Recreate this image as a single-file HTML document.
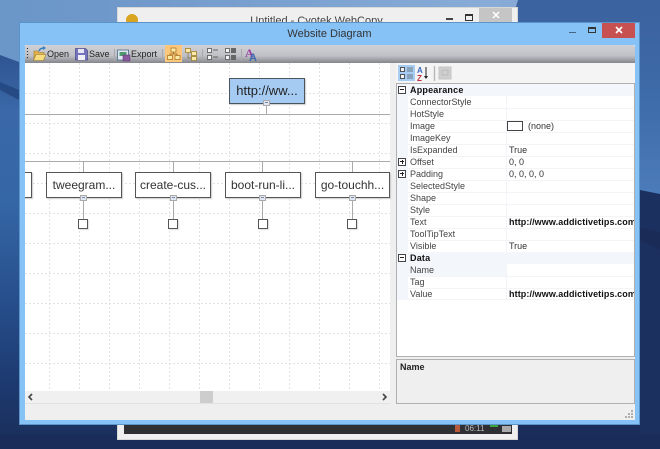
<!DOCTYPE html>
<html><head><meta charset="utf-8"><style>
html,body{margin:0;padding:0;background:#1b2d5a}
body{width:660px;height:449px;position:relative;overflow:hidden;font-family:"Liberation Sans",sans-serif;color:#222}
#w{position:absolute;left:0;top:0;width:660px;height:449px;overflow:hidden;filter:blur(.3px)}
.a{position:absolute}
.t{position:absolute;white-space:nowrap;font-size:9px;line-height:12px}
.node{position:absolute;box-sizing:border-box;height:26px;width:76px;background:#fff;border:1px solid #555;box-shadow:1px 1px 1px #ccc;font-size:12px;line-height:24px;text-align:center;white-space:nowrap;overflow:hidden;color:#333}
.v{position:absolute;width:1px;background:#aaa}
.h{position:absolute;height:1px;background:#aaa}
.exp{position:absolute;box-sizing:border-box;width:7px;height:6px;background:#dfe6f2;border:1px solid #aaa}
.exp:before{content:"";position:absolute;left:1px;top:1px;width:3px;height:1px;background:#7a8aa0}
.leaf{position:absolute;box-sizing:border-box;width:10px;height:10px;background:#fff;border:1px solid #555;box-shadow:1px 1px 1px #ddd}
.pb{position:absolute;box-sizing:border-box;width:8px;height:8px;border:1px solid #444;background:#fff;font-size:0}
.pb:before{content:"";position:absolute;left:1px;top:2px;width:4px;height:1px;background:#222}
.pb.p:after{content:"";position:absolute;left:2.5px;top:1px;width:1px;height:4px;background:#222}
</style></head><body><div id="w">
<svg class="a" style="left:0;top:0" width="660" height="449">
<defs>
<linearGradient id="top" x1="0" y1="0" x2="1" y2="0"><stop offset="0" stop-color="#6a96c8"/><stop offset=".2" stop-color="#6f98ca"/><stop offset="1" stop-color="#8aadd8"/></linearGradient>
<linearGradient id="lf" gradientUnits="userSpaceOnUse" x1="0" y1="55" x2="0" y2="449"><stop offset="0" stop-color="#2f5591"/><stop offset=".14" stop-color="#3a68a8"/><stop offset=".37" stop-color="#3566a6"/><stop offset=".62" stop-color="#274f8c"/><stop offset=".83" stop-color="#1d3a70"/><stop offset="1" stop-color="#1a2d58"/></linearGradient>
<linearGradient id="rt" x1="0" y1="0" x2="0" y2="1"><stop offset="0" stop-color="#3a629e"/><stop offset=".55" stop-color="#3f6cab"/><stop offset="1" stop-color="#4c7cb9"/></linearGradient>
</defs>
<rect width="660" height="449" fill="#1b2d5a"/>
<rect x="0" y="50" width="130" height="399" fill="url(#lf)"/>
<polygon points="0,0 518,0 508,30 19,62 0,55" fill="url(#top)"/>
<polygon points="0,82 19,90 19,100 0,90" fill="#264a84"/>
<polygon points="500,0 660,0 660,196 500,185" fill="url(#rt)"/>
<polygon points="500,0 518,0 510,26 500,26" fill="#86a9d6"/>
<polygon points="640,190 660,194 660,449 640,449" fill="#1c3060"/>
<polygon points="640,228 660,232 660,250 640,240" fill="#1a2b57"/>
<rect x="0" y="435" width="660" height="14" fill="#1b2d5a" opacity=".9"/>
</svg>

<!-- back window -->
<div class="a" style="left:118px;top:8px;width:399px;height:431px;background:#efefef;box-shadow:0 0 0 1px #d8d8d8"></div>
<div class="a" style="left:479px;top:8px;width:33px;height:14px;background:#c5c5c5"></div>
<div class="t" style="left:118px;top:13px;width:397px;text-align:center;font-size:11px;line-height:16px;color:#444">Untitled - Cyotek WebCopy</div>
<div class="a" style="left:126px;top:14px;width:12px;height:12px;border-radius:6px;background:#d9a520"></div>
<div class="a" style="left:446px;top:18px;width:7px;height:2px;background:#444"></div>
<div class="a" style="left:465px;top:14px;box-sizing:border-box;width:8px;height:7px;border:1px solid #333;border-top-width:2px"></div>
<svg class="a" style="left:492px;top:11px" width="8" height="8"><path d="M1 1L7 7M7 1L1 7" stroke="#fff" stroke-width="1.5"/></svg>
<div class="a" style="left:124px;top:425px;width:388px;height:9px;background:#2f3033"></div>
<div class="t" style="left:465px;top:424px;font-size:8px;line-height:10px;color:#bbb">06:11</div>
<div class="a" style="left:455px;top:425px;width:5px;height:7px;background:#b5583c"></div>
<div class="a" style="left:490px;top:425px;width:8px;height:2px;background:#3aa63a"></div>
<div class="a" style="left:502px;top:426px;width:9px;height:6px;background:#aaa"></div>

<!-- front window -->
<div class="a" style="left:19px;top:22px;width:621px;height:403px;box-sizing:border-box;background:#87c2f7;border:1px solid #5c93c9"></div>
<div class="t" style="left:19px;top:27px;width:621px;text-align:center;font-size:11px;line-height:15px;color:#333">Website Diagram</div>
<div class="a" style="left:569px;top:32px;width:7px;height:1px;background:#46637f"></div>
<div class="a" style="left:588px;top:27px;box-sizing:border-box;width:8px;height:6px;border:1px solid #333;border-top-width:2px"></div>
<div class="a" style="left:602px;top:23px;width:33px;height:15px;background:#c75050"></div>
<svg class="a" style="left:615px;top:26px" width="8" height="8"><path d="M1 1L7 7M7 1L1 7" stroke="#fff" stroke-width="1.6"/></svg>

<!-- client -->
<div class="a" style="left:25px;top:45px;width:610px;height:375px;background:#efefef"></div>

<!-- toolbar -->
<div class="a" style="left:25px;top:45px;width:610px;height:18px;background:linear-gradient(#d0d1d7,#bfc0c6 60%,#85868c);border-radius:2px 2px 0 0"></div>
<svg class="a" style="left:25px;top:45px" width="250" height="18">
<path d="M2.5 3v1M2.500 6v1M2.500 9v1M2.500 12v1" stroke="#333" stroke-width="1.2"/>
<!-- open -->
<path d="M9 6h4l1 1.500h5V15H9z" fill="#e2b24c" stroke="#9a7a30" stroke-width=".6"/>
<path d="M8.500 15.500l2.500-6h10l-2.500 6z" fill="#f8dc80" stroke="#9a7a30" stroke-width=".6"/>
<path d="M14 6q1-3 5-3" stroke="#2f7fc0" fill="none" stroke-width="1.4"/><path d="M18 1l3 2-3 2z" fill="#2f7fc0"/>
<!-- save -->
<path d="M50.500 3.500h10l2 2v9.500h-12z" fill="#7473bd" stroke="#54548f" stroke-width=".8"/>
<rect x="53" y="4" width="6" height="4" fill="#e8e8f4"/><rect x="53" y="10" width="7" height="5" fill="#f0f0f8"/>
<path d="M89.500 4v12" stroke="#a8a8ae"/>
<!-- export -->
<rect x="92.500" y="5" width="11" height="10" fill="#dfe8f2" stroke="#4a6a8a" stroke-width=".8"/>
<rect x="94.500" y="7" width="7" height="4" fill="#4f9a6f"/>
<rect x="98" y="10" width="7" height="6" fill="#8a5aa0" stroke="#553366" stroke-width=".5"/>
<path d="M137.500 4v12" stroke="#a8a8ae"/>
<!-- layout active -->
<rect x="140" y="0" width="17" height="17" fill="#fbc77c"/>
<g fill="#fbe9a8" stroke="#b07a20" stroke-width=".8"><rect x="146" y="3" width="5" height="4"/><rect x="142.500" y="10.500" width="5" height="4"/><rect x="150" y="10.500" width="5" height="4"/></g>
<path d="M148.500 7v2h-3.500v1.500M148.500 9h3.500v1.500" stroke="#8a6020" fill="none" stroke-width=".7"/>
<!-- layout 2 -->
<g fill="#fbe9a8" stroke="#a08030" stroke-width=".8"><rect x="160.500" y="3.500" width="5" height="4"/><rect x="166.500" y="6.500" width="5" height="4"/><rect x="166.500" y="11.500" width="5" height="4"/></g>
<path d="M163 8v5h3" stroke="#807040" fill="none" stroke-width=".7"/>
<path d="M177.500 4v12" stroke="#a8a8ae"/>
<!-- expand icons -->
<g fill="#f4f4f6" stroke="#555" stroke-width=".8"><rect x="182.500" y="3.500" width="4" height="4"/><rect x="182.500" y="10.500" width="4" height="4"/></g>
<path d="M188 5h5M188 12h5" stroke="#666"/>
<g fill="#f4f4f6" stroke="#555" stroke-width=".8"><rect x="200.500" y="3.500" width="4" height="4"/><rect x="200.500" y="10.500" width="4" height="4"/></g>
<path d="M206 3h5v5h-5zM206 10h5v5h-5z" fill="#666"/>
<path d="M216.500 4v12" stroke="#a8a8ae"/>
<!-- font icon -->
<text x="220" y="12" font-family="Liberation Serif" font-size="12" font-weight="bold" fill="#9a3fa0">A</text>
<text x="224" y="16" font-family="Liberation Sans" font-size="11" font-weight="bold" fill="#3a6ab0">A</text>
</svg>
<div class="t" style="left:47px;top:48px;color:#222">Open</div>
<div class="t" style="left:89px;top:48px;color:#222">Save</div>
<div class="t" style="left:131px;top:48px;color:#222">Export</div>

<!-- canvas -->
<div class="a" style="left:25px;top:63px;width:365px;height:328px;overflow:hidden;background:#fff">
<svg class="a" style="left:0;top:0" width="365" height="328">
<g stroke="#e2e2e2" stroke-dasharray="2 2" fill="none">
<path d="M24.500 0v328M54.500 0v328M84.500 0v328M114.500 0v328M144.500 0v328M174.500 0v328M204.500 0v328M234.500 0v328M264.500 0v328M294.500 0v328M324.500 0v328M354.500 0v328"/>
<path d="M0 30.500h365M0 60.500h365M0 90.500h365M0 120.500h365M0 150.500h365M0 180.500h365M0 210.500h365M0 240.500h365M0 270.500h365M0 300.500h365"/>
</g></svg>
</div>

<!-- diagram -->
<div class="node" style="left:229px;top:78px;background:#a6cbf3;border-color:#4a5560;color:#222;font-size:13px;line-height:24px">http://ww...</div>
<div class="v" style="left:266px;top:104px;height:10px"></div>
<div class="exp" style="left:263px;top:100px"></div>
<div class="h" style="left:25px;top:114px;width:365px"></div>
<div class="h" style="left:25px;top:161px;width:365px"></div>

<div class="node" style="left:0;top:172px;width:32px;clip-path:inset(-2px -2px -2px 25px)"></div>
<div class="node" style="left:46px;top:172px">tweegram...</div>
<div class="node" style="left:135px;top:172px">create-cus...</div>
<div class="node" style="left:225px;top:172px">boot-run-li...</div>
<div class="node" style="left:315px;top:172px;width:75px">go-touchh...</div>

<div class="v" style="left:83px;top:162px;height:10px"></div>
<div class="v" style="left:173px;top:162px;height:10px"></div>
<div class="v" style="left:262px;top:162px;height:10px"></div>
<div class="v" style="left:352px;top:162px;height:10px"></div>
<div class="v" style="left:83px;top:198px;height:21px"></div>
<div class="v" style="left:173px;top:198px;height:21px"></div>
<div class="v" style="left:262px;top:198px;height:21px"></div>
<div class="v" style="left:352px;top:198px;height:21px"></div>
<div class="exp" style="left:80px;top:195px"></div>
<div class="exp" style="left:170px;top:195px"></div>
<div class="exp" style="left:259px;top:195px"></div>
<div class="exp" style="left:349px;top:195px"></div>
<div class="leaf" style="left:78px;top:219px"></div>
<div class="leaf" style="left:168px;top:219px"></div>
<div class="leaf" style="left:258px;top:219px"></div>
<div class="leaf" style="left:347px;top:219px"></div>

<!-- hscroll -->
<div class="a" style="left:25px;top:391px;width:365px;height:12px;background:#f0f0f0;border-bottom:1px solid #e2e2e2"></div>
<div class="a" style="left:200px;top:391px;width:13px;height:12px;background:#cdcdcd"></div>
<svg class="a" style="left:27px;top:393px" width="8" height="8"><path d="M5 1L2 4l3 3" fill="none" stroke="#444" stroke-width="1.6"/></svg>
<svg class="a" style="left:380px;top:393px" width="8" height="8"><path d="M3 1l3 3-3 3" fill="none" stroke="#444" stroke-width="1.6"/></svg>

<!-- property toolbar -->
<div class="a" style="left:396px;top:63px;width:239px;height:20px;background:#f4f4f4"></div>
<div class="a" style="left:398px;top:65px;width:17px;height:16px;background:#a8cdf3"></div>
<svg class="a" style="left:396px;top:63px" width="70" height="20">
<g fill="#f4f4f4" stroke="#333" stroke-width=".8"><rect x="4.500" y="4.500" width="4" height="4"/><rect x="4.500" y="11.500" width="4" height="4"/></g>
<path d="M11 4h6v5h-6zM11 11h6v5h-6z" fill="#8aa3bd"/>
<text x="21" y="10" font-size="8" font-weight="bold" fill="#3a6ac0" font-family="Liberation Sans">A</text>
<text x="21" y="18" font-size="8" font-weight="bold" fill="#c03040" font-family="Liberation Sans">Z</text>
<path d="M30 4v10" stroke="#222" stroke-width="1"/><path d="M28 13h4l-2 3z" fill="#222"/>
<path d="M38.500 3v15" stroke="#b8b8b8" stroke-width="1.400"/>
<rect x="43" y="4" width="12" height="12" fill="#cfcfcf" stroke="#c4c4c4"/><rect x="46" y="7" width="6" height="5" fill="none" stroke="#bbb"/>
</svg>

<!-- property grid -->
<div class="a" style="left:396px;top:83px;width:239px;height:274px;box-sizing:border-box;background:#fff;border:1px solid #b0b0b0"></div>
<div class="a" style="left:397px;top:84px;width:11px;height:216px;background:#f3f6fb"></div>
<div class="a" style="left:397px;top:84px;width:237px;height:12px;background:#f3f6fb"></div>
<div class="a" style="left:397px;top:252px;width:237px;height:12px;background:#f3f6fb"></div>
<svg class="a" style="left:397px;top:84px" width="237" height="216">
<path d="M11 24.500h226M11 36.500h226M11 48.500h226M11 60.500h226M11 72.500h226M11 84.500h226M11 96.500h226M11 108.500h226M11 120.500h226M11 132.500h226M11 144.500h226M11 156.500h226M11 192.500h226M11 204.500h226M11 215.500h226" stroke="#f3f4f7"/>
<path d="M109.500 12v156M109.500 180v36" stroke="#f3f4f7"/>
<rect x="11" y="180" width="98" height="12" fill="#f3f6fb"/>
</svg>

<div class="pb" style="left:398px;top:86px"></div>
<div class="t" style="left:410px;top:84px;font-weight:bold;color:#111;letter-spacing:.2px">Appearance</div>
<div class="t" style="left:410px;top:96px;color:#444">ConnectorStyle</div>
<div class="t" style="left:410px;top:108px;color:#444">HotStyle</div>
<div class="t" style="left:410px;top:120px;color:#444">Image</div>
<div class="a" style="left:507px;top:121px;box-sizing:border-box;width:16px;height:10px;border:1px solid #444;background:#fff"></div>
<div class="t" style="left:528px;top:120px;color:#333">(none)</div>
<div class="t" style="left:410px;top:132px;color:#444">ImageKey</div>
<div class="t" style="left:410px;top:144px;color:#444">IsExpanded</div>
<div class="t" style="left:509px;top:144px;color:#333">True</div>
<div class="pb p" style="left:398px;top:158px"></div>
<div class="t" style="left:410px;top:156px;color:#444">Offset</div>
<div class="t" style="left:509px;top:156px;color:#333">0, 0</div>
<div class="pb p" style="left:398px;top:170px"></div>
<div class="t" style="left:410px;top:168px;color:#444">Padding</div>
<div class="t" style="left:509px;top:168px;color:#333">0, 0, 0, 0</div>
<div class="t" style="left:410px;top:180px;color:#444">SelectedStyle</div>
<div class="t" style="left:410px;top:192px;color:#444">Shape</div>
<div class="t" style="left:410px;top:204px;color:#444">Style</div>
<div class="t" style="left:410px;top:216px;color:#444">Text</div>
<div class="a" style="left:509px;top:216px;width:125px;height:12px;overflow:hidden"><div class="t" style="left:0;top:0;font-weight:bold;color:#111;letter-spacing:.1px">http://www.addictivetips.com</div></div>
<div class="t" style="left:410px;top:228px;color:#444">ToolTipText</div>
<div class="t" style="left:410px;top:240px;color:#444">Visible</div>
<div class="t" style="left:509px;top:240px;color:#333">True</div>
<div class="pb" style="left:398px;top:254px"></div>
<div class="t" style="left:410px;top:252px;font-weight:bold;color:#111;letter-spacing:.2px">Data</div>
<div class="t" style="left:410px;top:264px;color:#444">Name</div>
<div class="t" style="left:410px;top:276px;color:#444">Tag</div>
<div class="t" style="left:410px;top:288px;color:#444">Value</div>
<div class="a" style="left:509px;top:288px;width:125px;height:12px;overflow:hidden"><div class="t" style="left:0;top:0;font-weight:bold;color:#111;letter-spacing:.1px">http://www.addictivetips.com</div></div>

<!-- help box -->
<div class="a" style="left:396px;top:359px;width:239px;height:45px;box-sizing:border-box;background:#efefef;border:1px solid #b0b0b0"></div>
<div class="t" style="left:400px;top:361px;font-weight:bold;color:#222">Name</div>

<!-- grip -->
<svg class="a" style="left:624px;top:409px" width="10" height="10"><path d="M7 1h2v2H7zM4 4h2v2H4zM7 4h2v2H7zM1 7h2v2H1zM4 7h2v2H4zM7 7h2v2H7z" fill="#b0b0b0"/></svg>
</div></body></html>
